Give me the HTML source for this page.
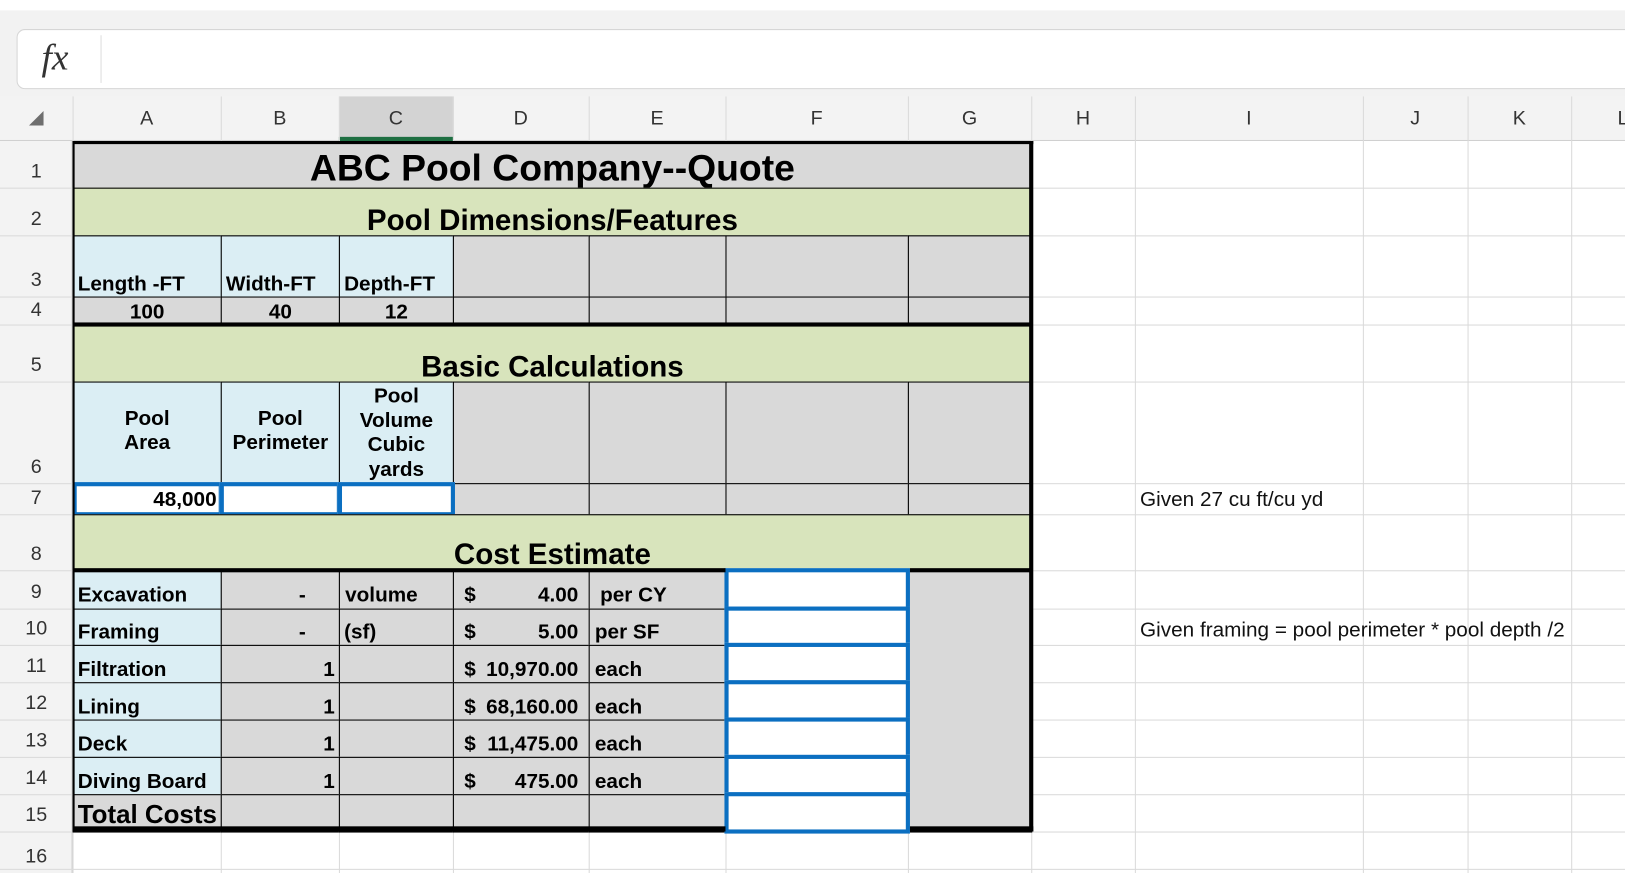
<!DOCTYPE html>
<html><head><meta charset="utf-8"><style>
html,body{margin:0;padding:0;background:#fff;overflow:hidden;width:1625px;height:873px}
#s{position:absolute;left:0;top:0;width:1568px;height:842px;transform:scale(1.0364,1.0368);transform-origin:0 0;font-family:"Liberation Sans",Arial,sans-serif;background:#fff}
.a{position:absolute;box-sizing:border-box}
.c{position:absolute;box-sizing:border-box;border:1px solid #000;font-weight:bold;font-size:20px;display:flex;color:#000;line-height:1;white-space:nowrap}
.g{background:#d9d9d9}.gr{background:#d8e4bc}.b{background:#dbeef4}.w{background:#fff}
.c.bl{border:4px solid #0b6fc1}
.vl{position:absolute;width:1px;background:#dadada}
.hl{position:absolute;height:1px;background:#dadada}
.rh{position:absolute;left:0;width:70px;text-align:center;font-size:19px;color:#333;display:flex;align-items:flex-end;justify-content:center;padding-bottom:4px;box-sizing:border-box}
.ch{position:absolute;top:93px;height:43px;font-size:19px;color:#333;display:flex;align-items:center;justify-content:center}
</style></head><body><div id="s">
<div class="a" style="left:0;top:10px;width:1568px;height:83px;background:#f2f2f2"></div>
<div class="a" style="left:16px;top:28px;width:1570px;height:58px;background:#fff;border:1px solid #d6d6d6;border-radius:8px"></div>
<div class="a" style="left:97px;top:34px;width:1px;height:46px;background:#ddd"></div>
<div class="a" style="left:40px;top:34px;font-family:'Liberation Serif',serif;font-style:italic;font-size:36px;color:#333">fx</div>
<div class="a" style="left:0;top:93px;width:1568px;height:43px;background:#f3f3f3;border-bottom:1px solid #d0d0d0"></div>
<div class="a" style="left:0;top:136px;width:70px;height:706px;background:#f3f3f3;border-right:1px solid #d0d0d0"></div>
<div class="a" style="left:327px;top:93px;width:110px;height:43px;background:#d3d3d3"></div>
<div class="a" style="left:327px;top:132px;width:110px;height:4px;background:#1e6f42"></div>
<svg class="a" style="left:26px;top:105px" width="18" height="18"><polygon points="16,2 16,16 2,16" fill="#6e6e6e"/></svg>
<div class="ch" style="left:70px;width:143px">A</div><div class="ch" style="left:213px;width:114px">B</div><div class="ch" style="left:327px;width:110px">C</div><div class="ch" style="left:437px;width:131px">D</div><div class="ch" style="left:568px;width:132px">E</div><div class="ch" style="left:700px;width:176px">F</div><div class="ch" style="left:876px;width:119px">G</div><div class="ch" style="left:995px;width:100px">H</div><div class="ch" style="left:1095px;width:220px">I</div><div class="ch" style="left:1315px;width:101px">J</div><div class="ch" style="left:1416px;width:100px">K</div><div class="ch" style="left:1556px;width:20px">L</div>
<div class="vl" style="left:213px;top:93px;height:749px"></div><div class="vl" style="left:327px;top:93px;height:749px"></div><div class="vl" style="left:437px;top:93px;height:749px"></div><div class="vl" style="left:568px;top:93px;height:749px"></div><div class="vl" style="left:700px;top:93px;height:749px"></div><div class="vl" style="left:876px;top:93px;height:749px"></div><div class="vl" style="left:995px;top:93px;height:749px"></div><div class="vl" style="left:1095px;top:93px;height:749px"></div><div class="vl" style="left:1315px;top:93px;height:749px"></div><div class="vl" style="left:1416px;top:93px;height:749px"></div><div class="vl" style="left:1516px;top:93px;height:749px"></div><div class="vl" style="left:70px;top:93px;height:749px"></div>
<div class="hl" style="left:0;top:181px;width:1568px"></div><div class="hl" style="left:0;top:227px;width:1568px"></div><div class="hl" style="left:0;top:286px;width:1568px"></div><div class="hl" style="left:0;top:313px;width:1568px"></div><div class="hl" style="left:0;top:368px;width:1568px"></div><div class="hl" style="left:0;top:466px;width:1568px"></div><div class="hl" style="left:0;top:496px;width:1568px"></div><div class="hl" style="left:0;top:550px;width:1568px"></div><div class="hl" style="left:0;top:587px;width:1568px"></div><div class="hl" style="left:0;top:622px;width:1568px"></div><div class="hl" style="left:0;top:658px;width:1568px"></div><div class="hl" style="left:0;top:694px;width:1568px"></div><div class="hl" style="left:0;top:730px;width:1568px"></div><div class="hl" style="left:0;top:766px;width:1568px"></div><div class="hl" style="left:0;top:802px;width:1568px"></div><div class="hl" style="left:0;top:838px;width:1568px"></div>
<div class="rh" style="top:136px;height:45px">1</div><div class="rh" style="top:181px;height:46px">2</div><div class="rh" style="top:227px;height:59px">3</div><div class="rh" style="top:286px;height:27px;padding-bottom:2px">4</div><div class="rh" style="top:313px;height:55px">5</div><div class="rh" style="top:368px;height:98px">6</div><div class="rh" style="top:466px;height:30px">7</div><div class="rh" style="top:496px;height:54px">8</div><div class="rh" style="top:550px;height:37px">9</div><div class="rh" style="top:587px;height:35px">10</div><div class="rh" style="top:622px;height:36px">11</div><div class="rh" style="top:658px;height:36px">12</div><div class="rh" style="top:694px;height:36px">13</div><div class="rh" style="top:730px;height:36px">14</div><div class="rh" style="top:766px;height:36px">15</div><div class="rh" style="top:802px;height:40px">16</div>
<div class="c g" style="left:70px;top:136px;width:926px;height:46px;font-size:36px;justify-content:center;align-items:flex-end;padding-bottom:1px">ABC Pool Company--Quote</div>
<div class="c gr" style="left:70px;top:181px;width:926px;height:47px;font-size:28.5px;justify-content:center;align-items:flex-end;padding-bottom:0">Pool Dimensions/Features</div>
<div class="c b" style="left:70px;top:227px;width:144px;height:60px;align-items:flex-end;padding:0 0 2px 4px">Length -FT</div>
<div class="c b" style="left:213px;top:227px;width:115px;height:60px;align-items:flex-end;padding:0 0 2px 4px">Width-FT</div>
<div class="c b" style="left:327px;top:227px;width:111px;height:60px;align-items:flex-end;padding:0 0 2px 4px">Depth-FT</div>
<div class="c g" style="left:437px;top:227px;width:132px;height:60px"></div><div class="c g" style="left:568px;top:227px;width:133px;height:60px"></div><div class="c g" style="left:700px;top:227px;width:177px;height:60px"></div><div class="c g" style="left:876px;top:227px;width:120px;height:60px"></div>
<div class="c g" style="left:70px;top:286px;width:144px;height:28px;justify-content:center;align-items:flex-end;padding-bottom:2px">100</div>
<div class="c g" style="left:213px;top:286px;width:115px;height:28px;justify-content:center;align-items:flex-end;padding-bottom:2px">40</div>
<div class="c g" style="left:327px;top:286px;width:111px;height:28px;justify-content:center;align-items:flex-end;padding-bottom:2px">12</div>
<div class="c g" style="left:437px;top:286px;width:132px;height:28px"></div><div class="c g" style="left:568px;top:286px;width:133px;height:28px"></div><div class="c g" style="left:700px;top:286px;width:177px;height:28px"></div><div class="c g" style="left:876px;top:286px;width:120px;height:28px"></div>
<div class="c gr" style="left:70px;top:313px;width:926px;height:56px;font-size:28.5px;justify-content:center;align-items:flex-end;padding-bottom:0">Basic Calculations</div>
<div class="a" style="left:70px;top:311px;width:926px;height:4px;background:#000"></div>
<div class="c b" style="left:70px;top:368px;width:144px;height:99px;justify-content:center;align-items:center;text-align:center;white-space:normal;line-height:23px;padding-bottom:4px">Pool<br>Area</div>
<div class="c b" style="left:213px;top:368px;width:115px;height:99px;justify-content:center;align-items:center;text-align:center;white-space:normal;line-height:23px;padding-bottom:4px">Pool<br>Perimeter</div>
<div class="c b" style="left:327px;top:368px;width:111px;height:99px;justify-content:center;align-items:flex-start;text-align:center;white-space:normal;line-height:23.5px;padding-top:2px;overflow:hidden">Pool<br>Volume<br>Cubic<br>yards</div>
<div class="c g" style="left:437px;top:368px;width:132px;height:99px"></div><div class="c g" style="left:568px;top:368px;width:133px;height:99px"></div><div class="c g" style="left:700px;top:368px;width:177px;height:99px"></div><div class="c g" style="left:876px;top:368px;width:120px;height:99px"></div>
<div class="c g" style="left:437px;top:466px;width:132px;height:31px"></div><div class="c g" style="left:568px;top:466px;width:133px;height:31px"></div><div class="c g" style="left:700px;top:466px;width:177px;height:31px"></div><div class="c g" style="left:876px;top:466px;width:120px;height:31px"></div>
<div class="c w bl" style="left:70px;top:465px;width:145px;height:33px;justify-content:flex-end;align-items:center;padding-right:2px">48,000</div>
<div class="c w bl" style="left:212px;top:465px;width:117px;height:33px"></div>
<div class="c w bl" style="left:326px;top:465px;width:113px;height:33px"></div>
<div class="c gr" style="left:70px;top:496px;width:926px;height:55px;font-size:28.5px;justify-content:center;align-items:flex-end;padding-bottom:1px">Cost Estimate</div>
<div class="c g" style="left:876px;top:550px;width:120px;height:253px"></div>
<div class="c b" style="left:70px;top:550px;width:144px;height:38px;align-items:flex-end;padding:0 0 3px 4px">Excavation</div>
<div class="c g" style="left:213px;top:550px;width:115px;height:38px;justify-content:flex-end;align-items:flex-end;padding:0 32px 3px 0">-</div>
<div class="c g" style="left:327px;top:550px;width:111px;height:38px;align-items:flex-end;padding:0 0 3px 5px">volume</div>
<div class="c g" style="left:437px;top:550px;width:132px;height:38px;align-items:flex-end;justify-content:space-between;padding:0 10px 3px 10px"><span>$</span><span>4.00</span></div>
<div class="c g" style="left:568px;top:550px;width:133px;height:38px;align-items:flex-end;padding:0 0 3px 10px">per CY</div>
<div class="c b" style="left:70px;top:587px;width:144px;height:36px;align-items:flex-end;padding:0 0 2px 4px">Framing</div>
<div class="c g" style="left:213px;top:587px;width:115px;height:36px;justify-content:flex-end;align-items:flex-end;padding:0 32px 2px 0">-</div>
<div class="c g" style="left:327px;top:587px;width:111px;height:36px;align-items:flex-end;padding:0 0 2px 4px">(sf)</div>
<div class="c g" style="left:437px;top:587px;width:132px;height:36px;align-items:flex-end;justify-content:space-between;padding:0 10px 2px 10px"><span>$</span><span>5.00</span></div>
<div class="c g" style="left:568px;top:587px;width:133px;height:36px;align-items:flex-end;padding:0 0 2px 5px">per SF</div>
<div class="c b" style="left:70px;top:622px;width:144px;height:37px;align-items:flex-end;padding:0 0 2px 4px">Filtration</div>
<div class="c g" style="left:213px;top:622px;width:115px;height:37px;justify-content:flex-end;align-items:flex-end;padding:0 4px 2px 0">1</div>
<div class="c g" style="left:327px;top:622px;width:111px;height:37px"></div>
<div class="c g" style="left:437px;top:622px;width:132px;height:37px;align-items:flex-end;justify-content:space-between;padding:0 10px 2px 10px"><span>$</span><span>10,970.00</span></div>
<div class="c g" style="left:568px;top:622px;width:133px;height:37px;align-items:flex-end;padding:0 0 2px 5px">each</div>
<div class="c b" style="left:70px;top:658px;width:144px;height:37px;align-items:flex-end;padding:0 0 2px 4px">Lining</div>
<div class="c g" style="left:213px;top:658px;width:115px;height:37px;justify-content:flex-end;align-items:flex-end;padding:0 4px 2px 0">1</div>
<div class="c g" style="left:327px;top:658px;width:111px;height:37px"></div>
<div class="c g" style="left:437px;top:658px;width:132px;height:37px;align-items:flex-end;justify-content:space-between;padding:0 10px 2px 10px"><span>$</span><span>68,160.00</span></div>
<div class="c g" style="left:568px;top:658px;width:133px;height:37px;align-items:flex-end;padding:0 0 2px 5px">each</div>
<div class="c b" style="left:70px;top:694px;width:144px;height:37px;align-items:flex-end;padding:0 0 2px 4px">Deck</div>
<div class="c g" style="left:213px;top:694px;width:115px;height:37px;justify-content:flex-end;align-items:flex-end;padding:0 4px 2px 0">1</div>
<div class="c g" style="left:327px;top:694px;width:111px;height:37px"></div>
<div class="c g" style="left:437px;top:694px;width:132px;height:37px;align-items:flex-end;justify-content:space-between;padding:0 10px 2px 10px"><span>$</span><span>11,475.00</span></div>
<div class="c g" style="left:568px;top:694px;width:133px;height:37px;align-items:flex-end;padding:0 0 2px 5px">each</div>
<div class="c b" style="left:70px;top:730px;width:144px;height:37px;align-items:flex-end;padding:0 0 2px 4px">Diving Board</div>
<div class="c g" style="left:213px;top:730px;width:115px;height:37px;justify-content:flex-end;align-items:flex-end;padding:0 4px 2px 0">1</div>
<div class="c g" style="left:327px;top:730px;width:111px;height:37px"></div>
<div class="c g" style="left:437px;top:730px;width:132px;height:37px;align-items:flex-end;justify-content:space-between;padding:0 10px 2px 10px"><span>$</span><span>475.00</span></div>
<div class="c g" style="left:568px;top:730px;width:133px;height:37px;align-items:flex-end;padding:0 0 2px 5px">each</div>
<div class="c g" style="left:70px;top:766px;width:144px;height:37px;align-items:flex-end;padding:0 0 3px 4px;font-size:25px">Total Costs</div>
<div class="c g" style="left:213px;top:766px;width:115px;height:37px"></div>
<div class="c g" style="left:327px;top:766px;width:111px;height:37px"></div>
<div class="c g" style="left:437px;top:766px;width:132px;height:37px"></div>
<div class="c g" style="left:568px;top:766px;width:133px;height:37px"></div>
<div class="c w bl" style="left:699px;top:548px;width:179px;height:42px"></div>
<div class="c w bl" style="left:699px;top:585px;width:179px;height:40px"></div>
<div class="c w bl" style="left:699px;top:620px;width:179px;height:41px"></div>
<div class="c w bl" style="left:699px;top:656px;width:179px;height:41px"></div>
<div class="c w bl" style="left:699px;top:692px;width:179px;height:41px"></div>
<div class="c w bl" style="left:699px;top:728px;width:179px;height:41px"></div>
<div class="c w bl" style="left:699px;top:764px;width:179px;height:40px"></div>
<div class="a" style="left:70px;top:548px;width:630px;height:4px;background:#000"></div>
<div class="a" style="left:878px;top:548px;width:118px;height:4px;background:#000"></div>
<div class="a" style="left:70px;top:797px;width:630px;height:5px;background:#000"></div>
<div class="a" style="left:878px;top:797px;width:119px;height:5px;background:#000"></div>
<div class="a" style="left:70px;top:136px;width:927px;height:3px;background:#000"></div>
<div class="a" style="left:993px;top:136px;width:4px;height:666px;background:#000"></div>
<div class="a" style="left:70px;top:136px;width:2px;height:666px;background:#000"></div>
<div class="a" style="left:1100px;top:471px;font-size:20px;color:#111">Given 27 cu ft/cu yd</div>
<div class="a" style="left:1100px;top:597px;font-size:20px;color:#111">Given framing = pool perimeter * pool depth /2</div>
</div></body></html>
